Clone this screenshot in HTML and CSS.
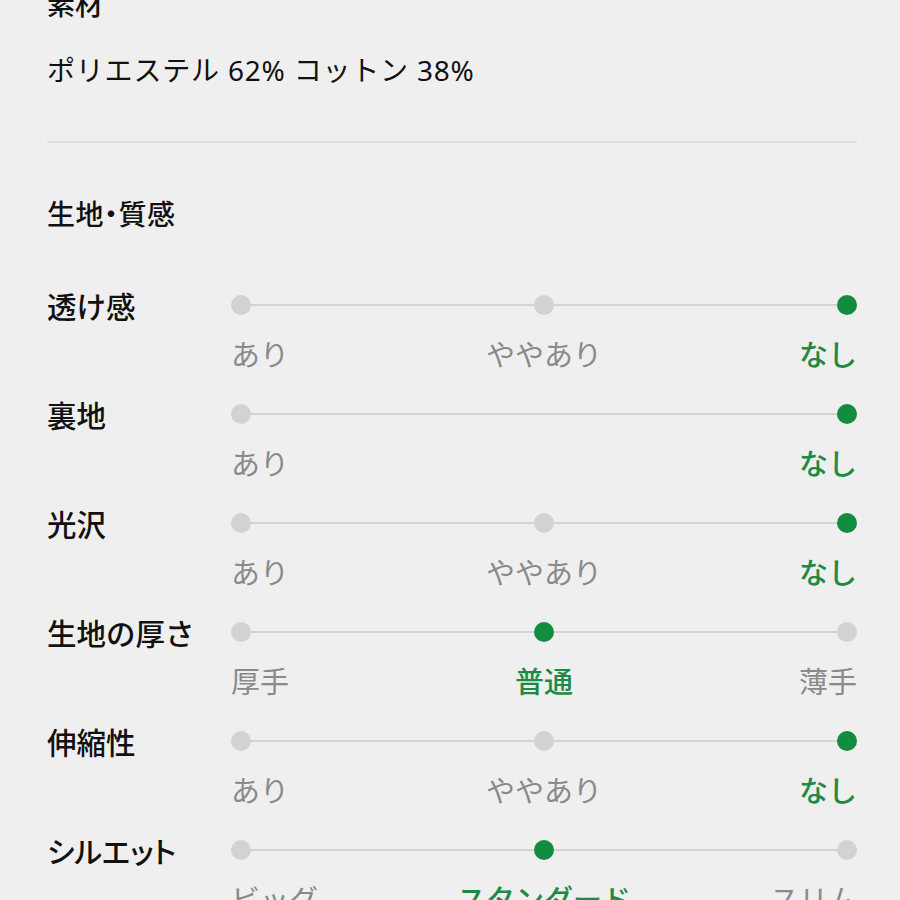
FILE: index.html
```html
<!DOCTYPE html>
<html lang="ja">
<head>
<meta charset="utf-8">
<title>素材・生地</title>
<link rel="stylesheet" href="styles.css">
</head>
<body>
<main class="spec">
  <section class="material">
    <h2 class="title">素材</h2>
    <p class="material-text">ポリエステル 62% コットン 38%</p>
  </section>
  <hr class="divider">
  <section class="fabric">
    <h2 class="heading">生地・質感</h2>

    <div class="row">
      <div class="row-label">透け感</div>
      <div class="scale">
        <div class="track"><span class="dot"></span><span class="dot"></span><span class="dot on"></span></div>
        <div class="options"><span class="opt l">あり</span><span class="opt c">ややあり</span><span class="opt r on">なし</span></div>
      </div>
    </div>

    <div class="row">
      <div class="row-label">裏地</div>
      <div class="scale">
        <div class="track"><span class="dot"></span><span class="dot on"></span></div>
        <div class="options"><span class="opt l">あり</span><span class="opt r on">なし</span></div>
      </div>
    </div>

    <div class="row">
      <div class="row-label">光沢</div>
      <div class="scale">
        <div class="track"><span class="dot"></span><span class="dot"></span><span class="dot on"></span></div>
        <div class="options"><span class="opt l">あり</span><span class="opt c">ややあり</span><span class="opt r on">なし</span></div>
      </div>
    </div>

    <div class="row">
      <div class="row-label">生地の厚さ</div>
      <div class="scale">
        <div class="track"><span class="dot"></span><span class="dot on"></span><span class="dot"></span></div>
        <div class="options"><span class="opt l">厚手</span><span class="opt c on">普通</span><span class="opt r">薄手</span></div>
      </div>
    </div>

    <div class="row">
      <div class="row-label">伸縮性</div>
      <div class="scale">
        <div class="track"><span class="dot"></span><span class="dot"></span><span class="dot on"></span></div>
        <div class="options"><span class="opt l">あり</span><span class="opt c">ややあり</span><span class="opt r on">なし</span></div>
      </div>
    </div>

    <div class="row">
      <div class="row-label kana">シルエット</div>
      <div class="scale">
        <div class="track"><span class="dot"></span><span class="dot on"></span><span class="dot"></span></div>
        <div class="options"><span class="opt l">ビッグ</span><span class="opt c on">スタンダード</span><span class="opt r">スリム</span></div>
      </div>
    </div>
  </section>
</main>
</body>
</html>
```
FILE: styles.css
```css
html, body {
  margin: 0;
  padding: 0;
  background: #efefef;
}

body {
  font-family: "Noto Sans CJK JP", "Noto Sans", sans-serif;
  color: #111;
  overflow: hidden;
  height: 900px;
}

.spec {
  padding: 0 43px 0 47px;
}

.title {
  margin: -17px 0 0;
  font-size: 28px;
  font-weight: 500;
  line-height: 40px;
}

/* Latin digits come from Noto Sans, kana from the CJK face */
.material-text {
  margin: 27px 0 0;
  font-family: "Noto Sans", "Noto Sans CJK JP", sans-serif;
  font-size: 28px;
  line-height: 40px;
  font-weight: 400;
  letter-spacing: 0.8px;
}

.divider {
  margin: 51px 0 0;
  border: 0;
  height: 2px;
  background: #dedede;
}

.heading {
  margin: 50px 0 52px;
  font-size: 28px;
  font-weight: 500;
  line-height: 40px;
  font-feature-settings: "palt";
  letter-spacing: 0.5px;
}

.row {
  display: flex;
  height: 109px;
}

.row-label {
  width: 184px;
  flex: none;
  font-size: 29.5px;
  font-weight: 500;
  line-height: 40px;
  white-space: nowrap;
}

.row-label.kana {
  font-feature-settings: "palt";
}

.scale {
  flex: 1;
  display: flex;
  flex-direction: column;
  gap: 8px;
}

.track {
  position: relative;
  height: 40px;
  display: flex;
  align-items: center;
  justify-content: space-between;
}

.track::before {
  content: "";
  position: absolute;
  left: 10px;
  right: 10px;
  top: 19px;
  height: 2px;
  background: #d3d3d3;
}

.dot {
  position: relative;
  width: 20px;
  height: 20px;
  border-radius: 50%;
  background: #d2d2d2;
}

.dot.on {
  background: #128c3e;
}

.options {
  display: grid;
  grid-template-columns: 1fr 1fr 1fr;
  font-size: 29px;
  line-height: 40px;
  color: #8a8a8a;
  white-space: nowrap;
}

.opt.l { grid-column: 1; text-align: left; }
.opt.c { grid-column: 2; text-align: center; }
.opt.r { grid-column: 3; text-align: right; }

.opt.on {
  color: #1f8a45;
  font-weight: 500;
}
```
